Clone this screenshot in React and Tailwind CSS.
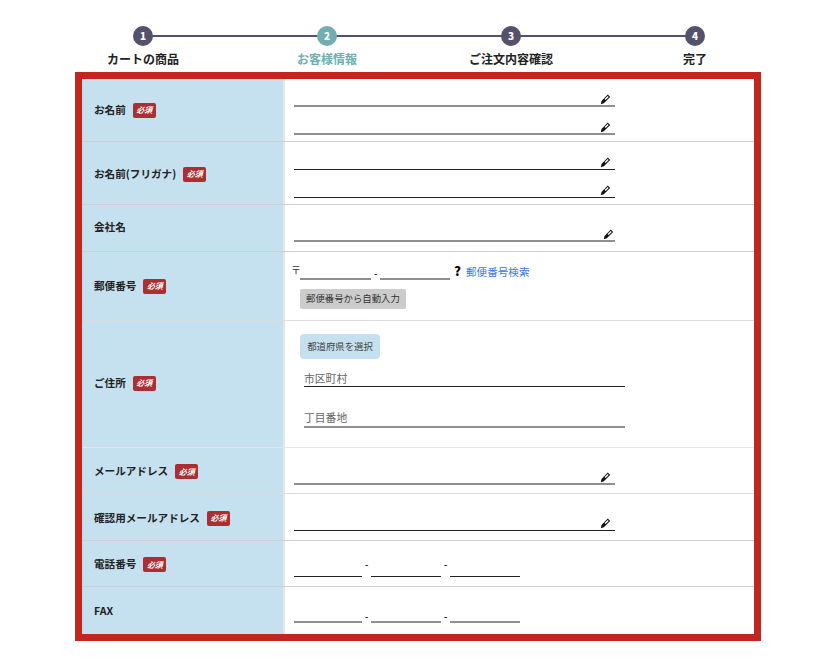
const FONT = "font-['Noto_Sans_CJK_JP','Noto_Sans',sans-serif]";

function Pencil() {
  return (
    <svg width="11" height="11" viewBox="0 0 11 11" className="block">
      <path d="M7.8 0.6 L10.2 3 L3.8 9.3 L0.8 10.2 L1.5 7.1 Z" fill="#111" />
      <path d="M7.7 2 L8.7 3 L5.6 6.1 L4.6 5.1 Z" fill="#fff" />
    </svg>
  );
}

function Required() {
  return (
    <span className="ml-[7px] inline-flex h-[15px] w-[23px] items-center justify-center rounded-[2px] bg-[#ad2e32] text-[8px] font-bold italic leading-none text-white">
      必須
    </span>
  );
}

function Step({ n, label, active }) {
  return (
    <div className="flex flex-col items-center">
      <div className={`z-10 flex h-[20px] w-[20px] items-center justify-center rounded-full text-[10px] font-extrabold leading-none text-white ${active ? "bg-[#70aeb1]" : "bg-[#53526a]"}`}>
        {n}
      </div>
      <div className={`mt-[4px] text-[12px] font-bold leading-[18px] ${active ? "text-[#70aeb1]" : "text-[#222]"}`}>{label}</div>
    </div>
  );
}

function Line({ dark, width = "w-[321px]", mt = "", children }) {
  return (
    <div className={`relative ${width} ${mt} ${dark ? "h-[1px] bg-[#222]" : "h-[2px] bg-[#8f8f8f]"}`}>
      {children}
    </div>
  );
}

function Field({ dark, mt, right = "right-[4px]" }) {
  return (
    <Line dark={dark} mt={mt}>
      <span className={`absolute bottom-[2px] ${right}`}>
        <Pencil />
      </span>
    </Line>
  );
}

function Row({ label, req, height, children, last, pad = "", line = "border-[#cfcfcf]", labelPad = "" }) {
  return (
    <div className={`flex ${height} ${last ? "" : `border-b ${line}`}`}>
      <div className={`flex w-[201px] items-center bg-[#c5e1ef] pl-[12px] text-[10.6px] font-bold leading-none text-[#222] ${labelPad}`}>
        {label}
        {req && <Required />}
      </div>
      <div className={`flex-1 border-l-2 border-[#e6e6e6] bg-white pl-[9px] ${pad}`}>{children}</div>
    </div>
  );
}

function Dash({ pb = "pb-[8px]" }) {
  return <span className={`mx-[3px] w-[3px] text-center text-[9px] font-bold leading-none text-[#222] ${pb}`}>-</span>;
}

function Tel({ dark, pb }) {
  return (
    <div className="flex items-end">
      <Line dark={dark} width="w-[68px]" />
      <Dash pb={pb} />
      <Line dark={dark} width="w-[70px]" />
      <Dash pb={pb} />
      <Line dark={dark} width="w-[70px]" />
    </div>
  );
}

export default function App() {
  return (
    <div className={`h-[664px] w-[840px] bg-white ${FONT}`}>
      <div className="relative mx-auto grid w-[736px] -translate-x-[1px] grid-cols-4 pt-[26px]">
        <div className="absolute left-[92px] top-[34.5px] h-[2px] w-[552px] bg-[#53526a]" />
        <Step n="1" label="カートの商品" />
        <Step n="2" label="お客様情報" active />
        <Step n="3" label="ご注文内容確認" />
        <Step n="4" label="完了" />
      </div>
      <div className="ml-[75px] mt-[4px] w-[686px] border-[7px] border-[#c1261f] bg-white">
        <Row label="お名前" req height="h-[63px]" pad="pt-[26px]">
          <Field />
          <Field mt="mt-[26px]" />
        </Row>
        <Row label="お名前(フリガナ)" req height="h-[63px]" pad="pt-[27px]" labelPad="pt-[2px]">
          <Field dark />
          <Field dark mt="mt-[27px]" />
        </Row>
        <Row label="会社名" height="h-[47px]" pad="pt-[35px]" labelPad="pb-[2px]">
          <Field right="right-[1px]" />
        </Row>
        <Row label="郵便番号" req height="h-[69px]" line="border-[#dcdcdc]">
          <div className="-ml-[3px] flex h-[28px] items-end">
            <span className="w-[9px] pb-[5px] text-[10px] leading-none text-[#333]">〒</span>
            <Line width="w-[71px]" />
            <Dash pb="pb-[2px]" />
            <Line width="w-[70px]" />
            <span className="ml-[4px] pb-[3px] text-[13px] font-black leading-none text-black">?</span>
            <span className="ml-[5px] pb-[2px] text-[10.6px] leading-none text-[#3a78e6]">郵便番号検索</span>
          </div>
          <button className="ml-[6px] mt-[9px] flex h-[20px] w-[106px] items-center justify-center rounded-[2px] bg-[#cccccc] text-[9.4px] leading-none text-[#333]">
            郵便番号から自動入力
          </button>
        </Row>
        <Row label="ご住所" req height="h-[127px]" pad="pt-[13px]" line="border-[#e6e6e6]" labelPad="pb-[2px]">
          <button className="ml-[6px] flex h-[25px] w-[80px] items-center justify-center rounded-[4px] bg-[#c5e1ef] text-[9.4px] leading-none text-[#444]">
            都道府県を選択
          </button>
          <div className="ml-[10px] mt-[13px] w-[321px] border-b border-[#222] pb-[1px] text-[10.8px] leading-[13px] text-[#666]">市区町村</div>
          <div className="ml-[10px] mt-[24px] w-[321px] border-b-2 border-[#8f8f8f] pb-[2px] text-[10.8px] leading-[13px] text-[#666]">丁目番地</div>
        </Row>
        <Row label="メールアドレス" req height="h-[46px]" pad="pt-[35px]" line="border-[#dcdcdc]" labelPad="pt-[2px]">
          <Field />
        </Row>
        <Row label="確認用メールアドレス" req height="h-[47px]" pad="pt-[36px]" labelPad="pt-[2px]">
          <Field dark />
        </Row>
        <Row label="電話番号" req height="h-[46px]" pad="pt-[19px]" labelPad="pt-[2px]">
          <Tel dark pb="pb-[8px]" />
        </Row>
        <Row label="FAX" last height="h-[47px]" pad="pt-[25px]" labelPad="pt-[2px]">
          <Tel pb="pb-[2px]" />
        </Row>
      </div>
    </div>
  );
}
